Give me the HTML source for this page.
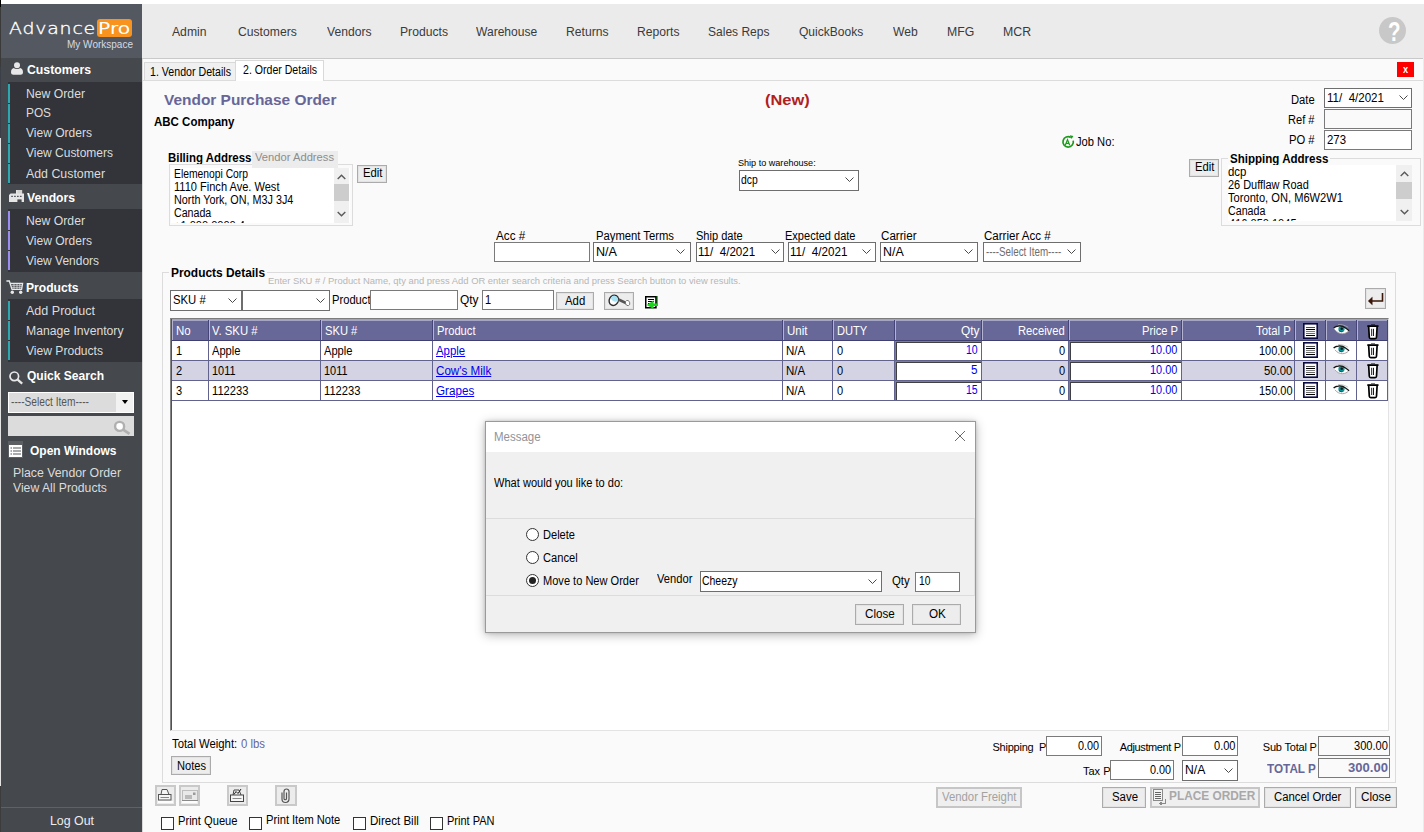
<!DOCTYPE html>
<html lang="en">
<head>
<meta charset="utf-8">
<title>AdvancePro - Vendor Purchase Order</title>
<style>
*{box-sizing:border-box;margin:0;padding:0}
html,body{width:1424px;height:832px;overflow:hidden;background:#fff}
body{position:relative;font-family:"Liberation Sans",sans-serif;font-size:11px;color:#000}
.a{position:absolute;white-space:pre}
svg{position:absolute;overflow:visible}
.tb{background:#fff;border:1px solid #7a7a7a}
.cb{background:#fff;border:1px solid #6e6e6e}
.btn{background:#ededed;border:1px solid #ababab;box-shadow:inset 0 0 0 1px #e3e3e3}
.dis{background:#efefef;border:2px solid #c6c6c6}
.gl{background:#62628f}
</style>
</head>
<body>
<div class="a" style="left:0px;top:0px;width:1px;height:7px;background:#000"></div>
<div class="a" style="left:0px;top:7px;width:1px;height:60px;background:#3a3a3a"></div>
<div class="a" style="left:0px;top:67px;width:1px;height:71px;background:#3b4048"></div>
<div class="a" style="left:0px;top:138px;width:1px;height:648px;background:#e4e4e4"></div>
<div class="a" style="left:0px;top:786px;width:1px;height:46px;background:#3c3c3c"></div>
<div class="a" style="left:1px;top:4px;width:141px;height:828px;background:#45484d"></div>
<div class="a" style="left:1px;top:4px;width:141px;height:54px;background:#545861"></div>
<span class="a" style="font-size:16px;font-weight:200;color:#fff;font-family:'DejaVu Sans Light','DejaVu Sans',sans-serif;left:8.5px;top:18.7px;line-height:20px;letter-spacing:0.7px;transform:scaleX(1.18);transform-origin:0 0;-webkit-text-stroke:0.35px #fff;">Advance</span>
<div class="a" style="left:97px;top:19px;width:35px;height:18px;background:#f7931e;border-radius:3px"></div>
<span class="a" style="font-size:16px;color:#fff;font-family:'DejaVu Sans',sans-serif;left:97.5px;top:18.7px;line-height:20px;transform:scaleX(1.27);transform-origin:0 0;">Pro</span>
<span class="a" style="font-size:10px;color:#d5dbe3;transform:scaleX(1.001);transform-origin:0 0;left:66.5px;top:37.7px;line-height:14px;">My Workspace</span>
<div class="a" style="left:1px;top:58px;width:141px;height:24px;background:#45484d"></div>
<svg style="left:11px;top:62px" width="12" height="13" viewBox="0 0 12 13"><circle cx="6" cy="3.2" r="3" fill="#e8e8e8"/><path d="M0 10.2c0-2.4 1.3-3.9 2.8-4.2 0.9 0.8 2 1.1 3.2 1.1s2.300-0.300 3.200-1.100c1.500 0.300 2.800 1.800 2.800 4.200 0 1.700-1 2.500-2.400 2.500h-7.200c-1.400 0-2.400-0.800-2.400-2.500z" fill="#e8e8e8"/></svg>
<span class="a" style="font-size:12px;font-weight:bold;color:#fff;transform:scaleX(1.021);transform-origin:0 0;left:26.5px;top:62.0px;line-height:16px;">Customers</span>
<div class="a" style="left:8px;top:82px;width:134px;height:102px;background:#323439"></div>
<div class="a" style="left:8px;top:84px;width:2px;height:19px;background:#2ba8b0"></div>
<div class="a" style="left:8px;top:104px;width:2px;height:19px;background:#2ba8b0"></div>
<div class="a" style="left:8px;top:124px;width:2px;height:19px;background:#2ba8b0"></div>
<div class="a" style="left:8px;top:144px;width:2px;height:19px;background:#2ba8b0"></div>
<div class="a" style="left:8px;top:164px;width:2px;height:19px;background:#2ba8b0"></div>
<span class="a" style="font-size:12px;color:#dcdcdc;transform:scaleX(1.017);transform-origin:0 0;left:25.5px;top:86.0px;line-height:16px;">New Order</span>
<span class="a" style="font-size:12px;color:#dcdcdc;transform:scaleX(0.986);transform-origin:0 0;left:25.5px;top:105.0px;line-height:16px;">POS</span>
<span class="a" style="font-size:12px;color:#dcdcdc;transform:scaleX(1.003);transform-origin:0 0;left:25.5px;top:125.0px;line-height:16px;">View Orders</span>
<span class="a" style="font-size:12px;color:#dcdcdc;transform:scaleX(0.998);transform-origin:0 0;left:25.5px;top:145.0px;line-height:16px;">View Customers</span>
<span class="a" style="font-size:12px;color:#dcdcdc;transform:scaleX(1.030);transform-origin:0 0;left:25.5px;top:165.5px;line-height:16px;">Add Customer</span>
<div class="a" style="left:1px;top:184px;width:141px;height:25px;background:#45484d"></div>
<svg style="left:9px;top:190px" width="15" height="12" viewBox="0 0 15 12" fill="#e6e6e6"><rect x="7" y="0" width="6.200" height="4" fill="#d4d4d4"/><rect x="7" y="0" width="1.400" height="4"/><path d="M0 5L1.600 3.500H15V12H0Z"/><g fill="#45484d"><rect x="2.200" y="5.800" width="1.700" height="1.100"/><rect x="5.100" y="5.800" width="1.700" height="1.100"/><rect x="8" y="5.800" width="1.700" height="1.100"/><rect x="10.900" y="5.800" width="1.700" height="1.100"/><rect x="8.400" y="9.400" width="4.200" height="2.600"/></g></svg>
<span class="a" style="font-size:12px;font-weight:bold;color:#fff;transform:scaleX(1.014);transform-origin:0 0;left:26.5px;top:189.5px;line-height:16px;">Vendors</span>
<div class="a" style="left:8px;top:209px;width:134px;height:63px;background:#323439"></div>
<div class="a" style="left:8px;top:211px;width:2px;height:19px;background:#9a8cf0"></div>
<div class="a" style="left:8px;top:231px;width:2px;height:19px;background:#9a8cf0"></div>
<div class="a" style="left:8px;top:251px;width:2px;height:19px;background:#9a8cf0"></div>
<span class="a" style="font-size:12px;color:#dcdcdc;transform:scaleX(1.017);transform-origin:0 0;left:25.5px;top:213.0px;line-height:16px;">New Order</span>
<span class="a" style="font-size:12px;color:#dcdcdc;transform:scaleX(1.003);transform-origin:0 0;left:25.5px;top:233.0px;line-height:16px;">View Orders</span>
<span class="a" style="font-size:12px;color:#dcdcdc;transform:scaleX(0.998);transform-origin:0 0;left:25.5px;top:252.5px;line-height:16px;">View Vendors</span>
<div class="a" style="left:1px;top:272px;width:141px;height:27px;background:#45484d"></div>
<svg style="left:6px;top:280px" width="17" height="14" viewBox="0 0 17 14" fill="none" stroke="#e8e8e8" stroke-width="1.300"><path d="M0.400 1H3.300L6 9.300H15.600L16.600 3.300H4.600"/><path d="M5.500 5.300H16M5.800 7.300H15.800M8 3.500V9M11 3.500V9M13.800 3.500V9" stroke-width="0.700"/><circle cx="6.300" cy="12.200" r="1.700" fill="#e8e8e8" stroke="none"/><circle cx="14.700" cy="12.200" r="1.700" fill="#e8e8e8" stroke="none"/></svg>
<span class="a" style="font-size:12px;font-weight:bold;color:#fff;transform:scaleX(1.009);transform-origin:0 0;left:26.0px;top:279.5px;line-height:16px;">Products</span>
<div class="a" style="left:8px;top:299px;width:134px;height:63px;background:#323439"></div>
<div class="a" style="left:8px;top:301px;width:2px;height:19px;background:#2ba8b0"></div>
<div class="a" style="left:8px;top:321px;width:2px;height:19px;background:#2ba8b0"></div>
<div class="a" style="left:8px;top:341px;width:2px;height:19px;background:#2ba8b0"></div>
<span class="a" style="font-size:12px;color:#dcdcdc;transform:scaleX(1.045);transform-origin:0 0;left:25.5px;top:302.5px;line-height:16px;">Add Product</span>
<span class="a" style="font-size:12px;color:#dcdcdc;transform:scaleX(1.015);transform-origin:0 0;left:25.5px;top:322.5px;line-height:16px;">Manage Inventory</span>
<span class="a" style="font-size:12px;color:#dcdcdc;transform:scaleX(1.007);transform-origin:0 0;left:25.5px;top:342.5px;line-height:16px;">View Products</span>
<svg style="left:9px;top:371px" width="14" height="13" viewBox="0 0 14 13" fill="none" stroke="#e8e8e8"><circle cx="5.300" cy="5.300" r="4.300" stroke-width="1.700"/><path d="M8.600 8.600l4.600 4" stroke-width="2.300"/></svg>
<span class="a" style="font-size:12px;font-weight:bold;color:#fff;transform:scaleX(1.004);transform-origin:0 0;left:26.5px;top:368.0px;line-height:16px;">Quick Search</span>
<div class="a" style="left:8px;top:392px;width:126px;height:21px;background:#fff"></div>
<div class="a" style="left:9px;top:393px;width:107px;height:19px;background:#dcdcdc"></div>
<div class="a" style="left:116px;top:393px;width:17px;height:19px;background:#f2f2f2"></div>
<span class="a" style="font-size:12px;color:#555;transform:scaleX(0.848);transform-origin:0 0;left:10.5px;top:393.5px;line-height:16px;">----Select Item----</span>
<div class="a" style="left:122px;top:400px;width:7px;height:4px;border:3.5px solid transparent;border-top:4px solid #000;border-bottom:0;width:0;height:0"></div>
<div class="a" style="left:8px;top:416px;width:126px;height:20px;background:#dcdcdc"></div>
<svg style="left:113px;top:420px" width="18" height="15" viewBox="0 0 18 15" fill="none" stroke="#b0b0b0"><circle cx="6.600" cy="6.400" r="4.500" stroke-width="2.400" fill="#fff"/><path d="M10.500 9.800l6 4" stroke-width="2.800"/></svg>
<svg style="left:8px;top:441px" width="15" height="17" viewBox="0 0 15 17"><rect width="15" height="17" fill="#5c5f64"/><rect x="1" y="4" width="13" height="12" fill="#fff"/><path d="M2.500 7h1.500M2.500 10h1.500M2.500 13h1.500M5 7h8M5 10h8M5 13h8" stroke="#55585d" stroke-width="1.200"/></svg>
<span class="a" style="font-size:12px;font-weight:bold;color:#fff;transform:scaleX(0.999);transform-origin:0 0;left:30.0px;top:442.5px;line-height:16px;">Open Windows</span>
<span class="a" style="font-size:12px;color:#dcdcdc;transform:scaleX(1.025);transform-origin:0 0;left:12.5px;top:464.5px;line-height:16px;">Place Vendor Order</span>
<span class="a" style="font-size:12px;color:#dcdcdc;transform:scaleX(1.016);transform-origin:0 0;left:12.5px;top:479.5px;line-height:16px;">View All Products</span>
<div class="a" style="left:1px;top:807px;width:141px;height:1px;background:#5e6166"></div>
<span class="a" style="font-size:12px;color:#ececec;transform:scaleX(1.030);transform-origin:0 0;left:50.0px;top:813.0px;line-height:16px;">Log Out</span>
<div class="a" style="left:142px;top:4px;width:1282px;height:55px;background:#ebebeb"></div>
<div class="a" style="left:142px;top:58px;width:1281px;height:1px;background:#c9c9c9"></div>
<span class="a" style="font-size:12px;color:#3a3a3a;transform:scaleX(1.014);transform-origin:0 0;left:171.5px;top:24.0px;line-height:16px;">Admin</span>
<span class="a" style="font-size:12px;color:#3a3a3a;transform:scaleX(1.013);transform-origin:0 0;left:238.2px;top:24.0px;line-height:16px;">Customers</span>
<span class="a" style="font-size:12px;color:#3a3a3a;transform:scaleX(1.010);transform-origin:0 0;left:326.5px;top:24.0px;line-height:16px;">Vendors</span>
<span class="a" style="font-size:12px;color:#3a3a3a;transform:scaleX(1.014);transform-origin:0 0;left:399.5px;top:24.0px;line-height:16px;">Products</span>
<span class="a" style="font-size:12px;color:#3a3a3a;transform:scaleX(1.005);transform-origin:0 0;left:476.2px;top:24.0px;line-height:16px;">Warehouse</span>
<span class="a" style="font-size:12px;color:#3a3a3a;transform:scaleX(1.011);transform-origin:0 0;left:566.2px;top:24.0px;line-height:16px;">Returns</span>
<span class="a" style="font-size:12px;color:#3a3a3a;transform:scaleX(1.011);transform-origin:0 0;left:637.0px;top:24.0px;line-height:16px;">Reports</span>
<span class="a" style="font-size:12px;color:#3a3a3a;transform:scaleX(1.002);transform-origin:0 0;left:708.2px;top:24.0px;line-height:16px;">Sales Reps</span>
<span class="a" style="font-size:12px;color:#3a3a3a;transform:scaleX(1.003);transform-origin:0 0;left:799.0px;top:24.0px;line-height:16px;">QuickBooks</span>
<span class="a" style="font-size:12px;color:#3a3a3a;transform:scaleX(1.011);transform-origin:0 0;left:893.2px;top:24.0px;line-height:16px;">Web</span>
<span class="a" style="font-size:12px;color:#3a3a3a;transform:scaleX(1.022);transform-origin:0 0;left:946.5px;top:24.0px;line-height:16px;">MFG</span>
<span class="a" style="font-size:12px;color:#3a3a3a;transform:scaleX(1.025);transform-origin:0 0;left:1002.5px;top:24.0px;line-height:16px;">MCR</span>
<div class="a" style="left:1379px;top:17px;width:27px;height:27px;background:#c8c8c8;border-radius:14px"></div>
<span class="a" style="font-size:27px;font-weight:bold;color:#fff;left:1387.8px;top:16.6px;line-height:31px;transform:scaleX(0.76);transform-origin:0 0;">?</span>
<div class="a" style="left:142px;top:59px;width:1281px;height:773px;background:#fafafa"></div>
<div class="a" style="left:1423px;top:59px;width:1px;height:773px;background:#ebebeb"></div>
<div class="a" style="left:142px;top:59px;width:1px;height:773px;background:#d8d8d8"></div>
<div class="a" style="left:143px;top:80px;width:1280px;height:1px;background:#dcdcdc"></div>
<div class="a" style="left:144px;top:62px;width:92px;height:19px;background:#f0f0f0;border:1px solid #d9d9d9;border-bottom:1px solid #dcdcdc"></div>
<div class="a" style="left:235px;top:60px;width:89px;height:21px;background:#fff;border:1px solid #d9d9d9;border-bottom:0"></div>
<span class="a" style="font-size:12px;transform:scaleX(0.886);transform-origin:0 0;left:150.0px;top:64.0px;line-height:16px;">1. Vendor Details</span>
<span class="a" style="font-size:12px;transform:scaleX(0.881);transform-origin:0 0;left:242.5px;top:62.0px;line-height:16px;">2. Order Details</span>
<div class="a" style="left:1397px;top:62px;width:17px;height:15px;background:#ff0000"></div>
<span class="a" style="font-size:10px;font-weight:bold;color:#fff;transform:scaleX(0.92);transform-origin:0 0;left:1402.5px;top:62.7px;line-height:14px;">x</span>
<span class="a" style="font-size:15px;font-weight:bold;color:#666699;transform:scaleX(1.029);transform-origin:0 0;left:164.0px;top:90.0px;line-height:19px;">Vendor Purchase Order</span>
<span class="a" style="font-size:12.3px;font-weight:bold;transform:scaleX(0.935);transform-origin:0 0;left:153.5px;top:113.8px;line-height:16.3px;">ABC Company</span>
<span class="a" style="font-size:15.5px;font-weight:bold;color:#b0201e;transform:scaleX(1.060);transform-origin:0 0;left:765.2px;top:90.1px;line-height:19.5px;">(New)</span>
<span class="a" style="font-size:12px;transform:scaleX(0.935);transform-origin:0 0;left:1290.8px;top:91.5px;line-height:16px;">Date</span>
<div class="a cb" style="left:1324px;top:88px;width:88px;height:20px;"></div>
<svg style="left:1398.5px;top:95.4px" width="9" height="5" viewBox="0 0 9 5" fill="none" stroke="#4a4a4a" stroke-width="1"><path d="M0.500 0.500l4 4 4-4"/></svg>
<span class="a" style="font-size:12px;transform:scaleX(0.963);transform-origin:0 0;left:1326.5px;top:90.0px;line-height:16px;">11/  4/2021</span>
<span class="a" style="font-size:12px;transform:scaleX(0.924);transform-origin:0 0;left:1288.0px;top:111.5px;line-height:16px;">Ref #</span>
<div class="a tb" style="left:1324px;top:109px;width:88px;height:20px;background:#fafafa"></div>
<span class="a" style="font-size:12px;transform:scaleX(0.936);transform-origin:0 0;left:1288.9px;top:131.7px;line-height:16px;">PO #</span>
<div class="a tb" style="left:1324px;top:130px;width:88px;height:20px;background:#fff"></div>
<span class="a" style="font-size:12px;transform:scaleX(0.949);transform-origin:0 0;left:1326.5px;top:131.7px;line-height:16px;">273</span>
<svg style="left:1061px;top:135px" width="14" height="14" viewBox="0 0 14 14" fill="none" stroke="#1c9a1c"><path d="M9.800 2.400a5.200 5.200 0 1 0 2.400 3.200" stroke-width="1.700"/><path d="M8.800 0.300l3.600 0.600-1.800 3.200z" fill="#1c9a1c" stroke="none"/><path d="M4.300 10.200l2.200-5.600 2.200 5.600M5.100 8.400h2.800" stroke-width="1.200"/></svg>
<span class="a" style="font-size:12px;transform:scaleX(0.931);transform-origin:0 0;left:1075.8px;top:134.0px;line-height:16px;">Job No:</span>
<div class="a" style="left:1221px;top:158px;width:200px;height:68px;border:1px solid #dcdcdc"></div>
<div class="a" style="left:1228px;top:152px;width:102px;height:14px;background:#fafafa"></div>
<span class="a" style="font-size:12px;font-weight:bold;transform:scaleX(0.962);transform-origin:0 0;left:1229.9px;top:150.8px;line-height:16px;">Shipping Address</span>
<div class="a" style="left:1228px;top:165px;width:184px;height:56px;background:#fff;overflow:hidden"><span class="a" style="left:1px;top:53px;font-size:12px;line-height:13px;transform:scaleX(0.92);transform-origin:0 0">416 858 1845</span></div>
<span class="a" style="font-size:12px;transform:scaleX(0.950);transform-origin:0 0;left:1228.1px;top:163.8px;line-height:16px;">dcp</span>
<span class="a" style="font-size:12px;transform:scaleX(0.912);transform-origin:0 0;left:1228.1px;top:176.7px;line-height:16px;">26 Dufflaw Road</span>
<span class="a" style="font-size:12px;transform:scaleX(0.927);transform-origin:0 0;left:1228.1px;top:189.7px;line-height:16px;">Toronto, ON, M6W2W1</span>
<span class="a" style="font-size:12px;transform:scaleX(0.889);transform-origin:0 0;left:1228.1px;top:202.5px;line-height:16px;">Canada</span>
<div class="a" style="left:1396px;top:165px;width:16px;height:56px;background:#f0f0f0"></div>
<div class="a" style="left:1396px;top:182px;width:16px;height:17px;background:#cdcdcd"></div>
<svg style="left:1399.5px;top:171px" width="9" height="6" viewBox="0 0 9 6" fill="none" stroke="#5a5a5a" stroke-width="1.400"><path d="M0.700 5l3.800-3.800 3.800 3.800"/></svg>
<svg style="left:1399.5px;top:209px" width="9" height="6" viewBox="0 0 9 6" fill="none" stroke="#5a5a5a" stroke-width="1.400"><path d="M0.700 1l3.800 3.800 3.800-3.800"/></svg>
<div class="a btn" style="left:1189px;top:159px;width:30px;height:18px;"></div>
<span class="a" style="font-size:12px;transform:scaleX(0.938);transform-origin:0 0;left:1195.1px;top:159.0px;line-height:16px;">Edit</span>
<span class="a" style="font-size:12px;font-weight:bold;transform:scaleX(0.953);transform-origin:0 0;left:168.0px;top:150.0px;line-height:16px;">Billing Address</span>
<div class="a" style="left:169px;top:164px;width:184px;height:62px;border:1px solid #dcdcdc"></div>
<div class="a" style="left:252px;top:151px;width:86px;height:17px;background:#ececec"></div>
<span class="a" style="font-size:11.5px;color:#8c8c8c;transform:scaleX(0.973);transform-origin:0 0;left:254.8px;top:150.4px;line-height:15.5px;">Vendor Address</span>
<div class="a" style="left:171px;top:168px;width:179px;height:55px;background:#fff;overflow:hidden"><span class="a" style="left:3px;top:52px;font-size:12px;line-height:13px;transform:scaleX(0.92);transform-origin:0 0">+1 888 8888 4</span></div>
<span class="a" style="font-size:12px;transform:scaleX(0.860);transform-origin:0 0;left:173.5px;top:166.0px;line-height:16px;">Elemenopi Corp</span>
<span class="a" style="font-size:12px;transform:scaleX(0.921);transform-origin:0 0;left:174.0px;top:179.0px;line-height:16px;">1110 Finch Ave. West</span>
<span class="a" style="font-size:12px;transform:scaleX(0.899);transform-origin:0 0;left:174.0px;top:192.0px;line-height:16px;">North York, ON, M3J 3J4</span>
<span class="a" style="font-size:12px;transform:scaleX(0.887);transform-origin:0 0;left:173.5px;top:205.0px;line-height:16px;">Canada</span>
<div class="a" style="left:334px;top:168px;width:15px;height:55px;background:#f0f0f0"></div>
<div class="a" style="left:334px;top:184px;width:15px;height:17px;background:#cdcdcd"></div>
<svg style="left:337.0px;top:174px" width="9" height="6" viewBox="0 0 9 6" fill="none" stroke="#5a5a5a" stroke-width="1.400"><path d="M0.700 5l3.800-3.800 3.800 3.800"/></svg>
<svg style="left:337.0px;top:211px" width="9" height="6" viewBox="0 0 9 6" fill="none" stroke="#5a5a5a" stroke-width="1.400"><path d="M0.700 1l3.800 3.800 3.800-3.800"/></svg>
<div class="a btn" style="left:357px;top:165px;width:30px;height:18px;"></div>
<span class="a" style="font-size:12px;transform:scaleX(0.943);transform-origin:0 0;left:363.0px;top:165.0px;line-height:16px;">Edit</span>
<span class="a" style="font-size:9.5px;transform:scaleX(0.955);transform-origin:0 0;left:737.8px;top:156.1px;line-height:13.5px;">Ship to warehouse:</span>
<div class="a cb" style="left:739px;top:170px;width:120px;height:21px;"></div>
<svg style="left:845.3px;top:177.4px" width="9" height="5" viewBox="0 0 9 5" fill="none" stroke="#4a4a4a" stroke-width="1"><path d="M0.500 0.500l4 4 4-4"/></svg>
<span class="a" style="font-size:12px;transform:scaleX(0.863);transform-origin:0 0;left:741.3px;top:171.5px;line-height:16px;">dcp</span>
<span class="a" style="font-size:12px;transform:scaleX(0.973);transform-origin:0 0;left:495.8px;top:227.5px;line-height:16px;">Acc #</span>
<div class="a tb" style="left:494px;top:242px;width:96px;height:20px;background:#fff"></div>
<span class="a" style="font-size:12px;transform:scaleX(0.938);transform-origin:0 0;left:595.8px;top:227.5px;line-height:16px;">Payment Terms</span>
<div class="a cb" style="left:593px;top:242px;width:98px;height:20px;"></div>
<svg style="left:676.0px;top:249.4px" width="9" height="5" viewBox="0 0 9 5" fill="none" stroke="#4a4a4a" stroke-width="1"><path d="M0.500 0.500l4 4 4-4"/></svg>
<span class="a" style="font-size:12px;transform:scaleX(1.049);transform-origin:0 0;left:595.8px;top:244.0px;line-height:16px;">N/A</span>
<span class="a" style="font-size:12px;transform:scaleX(0.921);transform-origin:0 0;left:695.8px;top:227.5px;line-height:16px;">Ship date</span>
<div class="a cb" style="left:696px;top:242px;width:88px;height:20px;"></div>
<svg style="left:770.5px;top:249.4px" width="9" height="5" viewBox="0 0 9 5" fill="none" stroke="#4a4a4a" stroke-width="1"><path d="M0.500 0.500l4 4 4-4"/></svg>
<span class="a" style="font-size:12px;transform:scaleX(0.967);transform-origin:0 0;left:698.3px;top:244.0px;line-height:16px;">11/  4/2021</span>
<span class="a" style="font-size:12px;transform:scaleX(0.919);transform-origin:0 0;left:785.0px;top:227.5px;line-height:16px;">Expected date</span>
<div class="a cb" style="left:788px;top:242px;width:88px;height:20px;"></div>
<svg style="left:862.0px;top:249.4px" width="9" height="5" viewBox="0 0 9 5" fill="none" stroke="#4a4a4a" stroke-width="1"><path d="M0.500 0.500l4 4 4-4"/></svg>
<span class="a" style="font-size:12px;transform:scaleX(0.972);transform-origin:0 0;left:790.0px;top:244.0px;line-height:16px;">11/  4/2021</span>
<span class="a" style="font-size:12px;transform:scaleX(0.968);transform-origin:0 0;left:880.8px;top:227.5px;line-height:16px;">Carrier</span>
<div class="a cb" style="left:880px;top:242px;width:98px;height:20px;"></div>
<svg style="left:964.3px;top:249.4px" width="9" height="5" viewBox="0 0 9 5" fill="none" stroke="#4a4a4a" stroke-width="1"><path d="M0.500 0.500l4 4 4-4"/></svg>
<span class="a" style="font-size:12px;transform:scaleX(1.034);transform-origin:0 0;left:882.8px;top:244.0px;line-height:16px;">N/A</span>
<span class="a" style="font-size:12px;transform:scaleX(0.962);transform-origin:0 0;left:983.8px;top:227.5px;line-height:16px;">Carrier Acc #</span>
<div class="a cb" style="left:983px;top:242px;width:98px;height:20px;"></div>
<svg style="left:1067.3px;top:249.4px" width="9" height="5" viewBox="0 0 9 5" fill="none" stroke="#4a4a4a" stroke-width="1"><path d="M0.500 0.500l4 4 4-4"/></svg>
<span class="a" style="font-size:12px;color:#6d6d6d;transform:scaleX(0.817);transform-origin:0 0;left:985.8px;top:244.0px;line-height:16px;">----Select Item----</span>
<div class="a" style="left:162px;top:272px;width:1234px;height:511px;border:1px solid #dcdcdc"></div>
<div class="a" style="left:169px;top:264px;width:98px;height:16px;background:#fafafa"></div>
<span class="a" style="font-size:12px;font-weight:bold;transform:scaleX(0.993);transform-origin:0 0;left:170.5px;top:265.3px;line-height:16px;">Products Details</span>
<span class="a" style="font-size:9.5px;color:#b6b6b6;transform:scaleX(0.989);transform-origin:0 0;left:267.8px;top:274.1px;line-height:13.5px;">Enter SKU # / Product Name, qty and press Add OR enter search criteria and press Search button to view results.</span>
<div class="a cb" style="left:170px;top:290px;width:72px;height:21px;"></div>
<svg style="left:228.3px;top:297.9px" width="9" height="5" viewBox="0 0 9 5" fill="none" stroke="#4a4a4a" stroke-width="1"><path d="M0.500 0.500l4 4 4-4"/></svg>
<span class="a" style="font-size:12px;transform:scaleX(0.943);transform-origin:0 0;left:172.8px;top:292.0px;line-height:16px;">SKU #</span>
<div class="a cb" style="left:242px;top:290px;width:88px;height:21px;"></div>
<svg style="left:316.3px;top:297.9px" width="9" height="5" viewBox="0 0 9 5" fill="none" stroke="#4a4a4a" stroke-width="1"><path d="M0.500 0.500l4 4 4-4"/></svg>
<span class="a" style="font-size:12px;transform:scaleX(0.931);transform-origin:0 0;left:332.0px;top:292.0px;line-height:16px;">Product</span>
<div class="a tb" style="left:370px;top:290px;width:88px;height:20px;background:#fff"></div>
<span class="a" style="font-size:12px;transform:scaleX(0.991);transform-origin:0 0;left:459.5px;top:292.0px;line-height:16px;">Qty</span>
<div class="a tb" style="left:482px;top:290px;width:72px;height:20px;background:#fff"></div>
<span class="a" style="font-size:12px;transform:scaleX(0.92);transform-origin:0 0;left:485.0px;top:292.0px;line-height:16px;">1</span>
<div class="a btn" style="left:556px;top:292px;width:38px;height:18px;"></div>
<span class="a" style="font-size:12px;transform:scaleX(0.946);transform-origin:0 0;left:565.3px;top:292.5px;line-height:16px;">Add</span>
<div class="a btn" style="left:604px;top:292px;width:30px;height:18px;"></div>
<svg style="left:608px;top:294px" width="24" height="14" viewBox="0 0 24 14" fill="none"><g transform="rotate(28 5.800 6.300)"><ellipse cx="5.800" cy="6.300" rx="4.500" ry="5.300" fill="#fff" stroke="#2e2e2e" stroke-width="1.400"/><path d="M1.900 6.300a3.900 4.700 0 0 1 7.800 0c-2 -1.500 -5.500 -1.500 -7.800 0z" fill="#a6e2f3"/><ellipse cx="5.600" cy="4.600" rx="3.300" ry="2.600" fill="#a6e2f3"/></g><path d="M10.500 5.500L19 9.500" stroke="#555" stroke-width="2.600"/><ellipse cx="19.600" cy="9" rx="2.100" ry="2.700" transform="rotate(-20 19.600 9)" fill="#fff" stroke="#666" stroke-width="0.800"/></svg>
<svg style="left:645px;top:296px" width="13" height="13" viewBox="0 0 13 13"><rect x="11" y="0" width="2" height="9.500" fill="#1fd01f"/><rect x="0.750" y="0.750" width="10.200" height="11" fill="#fff" stroke="#000" stroke-width="1.500"/><path d="M2.500 3.500h6.500M2.500 5.500h6.500M2.500 7.500h3" stroke="#000" stroke-width="1" shape-rendering="crispEdges"/><path d="M13 7.500L8.600 7.500L8.600 4.300L1.700 8.900L8.600 13L8.600 10L13 10Z" fill="#1fd01f"/></svg>
<div class="a btn" style="left:1365px;top:288px;width:21px;height:21px;"></div>
<svg style="left:1368px;top:293px" width="16" height="12" viewBox="0 0 16 12" fill="none" stroke="#3a1608" stroke-width="1.600"><path d="M14.500 0v8h-11"/><path d="M4.300 4l-4.200 4 4.200 4z" fill="#3a1608" stroke-width="0.300"/></svg>
<div class="a" style="left:170px;top:318px;width:1219px;height:413px;background:#fff;border-top:1px solid #7c7c7c;border-left:1px solid #858585;border-right:1px solid #e3e3e3;border-bottom:1px solid #e3e3e3"></div>
<div class="a" style="left:171px;top:319px;width:1217px;height:1px;background:#a6a6a6"></div>
<div class="a" style="left:171px;top:319px;width:1px;height:411px;background:#525252"></div>
<div class="a" style="left:172px;top:320px;width:1216px;height:21px;background:#676798"></div>
<div class="a" style="left:172px;top:320px;width:1216px;height:1px;background:#a4a4c6"></div>
<div class="a" style="left:172px;top:340px;width:1216px;height:1px;background:#3f3f72"></div>
<div class="a" style="left:172px;top:320px;width:1px;height:20px;background:#b4b4d2"></div>
<div class="a" style="left:209px;top:320px;width:1px;height:20px;background:#b4b4d2"></div>
<div class="a" style="left:321px;top:320px;width:1px;height:20px;background:#b4b4d2"></div>
<div class="a" style="left:433px;top:320px;width:1px;height:20px;background:#b4b4d2"></div>
<div class="a" style="left:783px;top:320px;width:1px;height:20px;background:#b4b4d2"></div>
<div class="a" style="left:833px;top:320px;width:1px;height:20px;background:#b4b4d2"></div>
<div class="a" style="left:895px;top:320px;width:1px;height:20px;background:#b4b4d2"></div>
<div class="a" style="left:982px;top:320px;width:1px;height:20px;background:#b4b4d2"></div>
<div class="a" style="left:1069px;top:320px;width:1px;height:20px;background:#b4b4d2"></div>
<div class="a" style="left:1182px;top:320px;width:1px;height:20px;background:#b4b4d2"></div>
<div class="a" style="left:1295px;top:320px;width:1px;height:20px;background:#b4b4d2"></div>
<div class="a" style="left:1326px;top:320px;width:1px;height:20px;background:#b4b4d2"></div>
<div class="a" style="left:1357px;top:320px;width:1px;height:20px;background:#b4b4d2"></div>
<div class="a" style="left:208px;top:320px;width:1px;height:21px;background:#45457a"></div>
<div class="a" style="left:320px;top:320px;width:1px;height:21px;background:#45457a"></div>
<div class="a" style="left:432px;top:320px;width:1px;height:21px;background:#45457a"></div>
<div class="a" style="left:782px;top:320px;width:1px;height:21px;background:#45457a"></div>
<div class="a" style="left:832px;top:320px;width:1px;height:21px;background:#45457a"></div>
<div class="a" style="left:894px;top:320px;width:1px;height:21px;background:#45457a"></div>
<div class="a" style="left:981px;top:320px;width:1px;height:21px;background:#45457a"></div>
<div class="a" style="left:1068px;top:320px;width:1px;height:21px;background:#45457a"></div>
<div class="a" style="left:1181px;top:320px;width:1px;height:21px;background:#45457a"></div>
<div class="a" style="left:1294px;top:320px;width:1px;height:21px;background:#45457a"></div>
<div class="a" style="left:1325px;top:320px;width:1px;height:21px;background:#45457a"></div>
<div class="a" style="left:1356px;top:320px;width:1px;height:21px;background:#45457a"></div>
<div class="a" style="left:1387px;top:320px;width:1px;height:21px;background:#45457a"></div>
<div class="a" style="left:172px;top:361px;width:1216px;height:19px;background:#d3d3e3"></div>
<div class="a" style="left:172px;top:360px;width:1216px;height:1px;background:#62628f"></div>
<div class="a" style="left:172px;top:380px;width:1216px;height:1px;background:#62628f"></div>
<div class="a" style="left:172px;top:400px;width:1216px;height:1px;background:#62628f"></div>
<div class="a" style="left:208px;top:341px;width:1px;height:60px;background:#62628f"></div>
<div class="a" style="left:320px;top:341px;width:1px;height:60px;background:#62628f"></div>
<div class="a" style="left:432px;top:341px;width:1px;height:60px;background:#62628f"></div>
<div class="a" style="left:782px;top:341px;width:1px;height:60px;background:#62628f"></div>
<div class="a" style="left:832px;top:341px;width:1px;height:60px;background:#62628f"></div>
<div class="a" style="left:894px;top:341px;width:1px;height:60px;background:#62628f"></div>
<div class="a" style="left:981px;top:341px;width:1px;height:60px;background:#62628f"></div>
<div class="a" style="left:1068px;top:341px;width:1px;height:60px;background:#62628f"></div>
<div class="a" style="left:1181px;top:341px;width:1px;height:60px;background:#62628f"></div>
<div class="a" style="left:1294px;top:341px;width:1px;height:60px;background:#62628f"></div>
<div class="a" style="left:1325px;top:341px;width:1px;height:60px;background:#62628f"></div>
<div class="a" style="left:1356px;top:341px;width:1px;height:60px;background:#62628f"></div>
<div class="a" style="left:1387px;top:341px;width:1px;height:60px;background:#62628f"></div>
<span class="a" style="font-size:12px;color:#fff;transform:scaleX(0.958);transform-origin:0 0;left:175.8px;top:322.8px;line-height:16px;">No</span>
<span class="a" style="font-size:12px;color:#fff;transform:scaleX(0.943);transform-origin:0 0;left:212.0px;top:322.8px;line-height:16px;">V. SKU #</span>
<span class="a" style="font-size:12px;color:#fff;transform:scaleX(0.931);transform-origin:0 0;left:324.5px;top:322.8px;line-height:16px;">SKU #</span>
<span class="a" style="font-size:12px;color:#fff;transform:scaleX(0.931);transform-origin:0 0;left:437.0px;top:322.8px;line-height:16px;">Product</span>
<span class="a" style="font-size:12px;color:#fff;transform:scaleX(0.960);transform-origin:0 0;left:787.0px;top:322.8px;line-height:16px;">Unit</span>
<span class="a" style="font-size:12px;color:#fff;transform:scaleX(0.927);transform-origin:0 0;left:837.0px;top:322.8px;line-height:16px;">DUTY</span>
<span class="a" style="font-size:12px;color:#fff;transform:scaleX(0.991);transform-origin:0 0;left:960.8px;top:322.8px;line-height:16px;">Qty</span>
<span class="a" style="font-size:12px;color:#fff;transform:scaleX(0.933);transform-origin:0 0;left:1018.3px;top:322.8px;line-height:16px;">Received</span>
<span class="a" style="font-size:12px;color:#fff;transform:scaleX(0.931);transform-origin:0 0;left:1142.0px;top:322.8px;line-height:16px;">Price P</span>
<span class="a" style="font-size:12px;color:#fff;transform:scaleX(0.946);transform-origin:0 0;left:1256.3px;top:322.8px;line-height:16px;">Total P</span>
<svg style="left:1303px;top:323px" width="15" height="16" viewBox="0 0 15 16" shape-rendering="crispEdges"><rect x="0" y="0" width="15" height="16" fill="#0a0a40"/><rect x="1.600" y="1.600" width="11.800" height="12.800" fill="#fbfbfb" shape-rendering="auto"/><rect x="3" y="4" width="9" height="1" fill="#4a4a4a"/><rect x="3" y="6" width="9" height="1" fill="#000"/><rect x="3" y="8" width="9" height="1" fill="#7a7a7a"/><rect x="3" y="10" width="9" height="1" fill="#6a6a6a"/><rect x="3" y="12" width="9" height="1" fill="#000"/></svg>
<svg style="left:1333px;top:324px" width="17" height="11" viewBox="0 0 17 11" fill="none"><path d="M0.500 3.800C2 2.600 4 2 5.500 2C8 1.600 11 2.800 12.500 4C14 5 15.500 6 16 6.800C15 8.400 12 9.600 9.500 9.700C7 9.800 4 8.500 2 5.900Z" fill="#fdfdfd"/><path d="M5 0.600C8 0.200 12 1.200 15.200 3.300" stroke="#b4b4b4" stroke-width="0.700"/><circle cx="8.500" cy="5" r="3.100" fill="#079292"/><path d="M5.600 5.800a3.100 3.100 0 0 0 5 1.800c-1.800 0.300-3.600-0.400-5-1.800z" fill="#1838a8"/><circle cx="8.700" cy="4.700" r="1.200" fill="#0c1418"/><path d="M2 5.900C4 8.500 7 9.800 9.500 9.700C12 9.600 14 8.600 15.200 7.300" stroke="#9c9c9c" stroke-width="0.900"/><path d="M0.600 4C2 2.700 4 2.100 5.500 2C8 1.600 11 2.800 12.500 4C14 5 15.300 5.900 16 6.700" stroke="#161616" stroke-width="1.400"/></svg>
<svg style="left:1366.500px;top:323.5px" width="12" height="16" viewBox="0 0 12 16" fill="none" stroke="#000"><path d="M4.500 0.500h1M6.500 0.500h1" stroke-width="1"/><rect x="0.300" y="1.200" width="11.200" height="1.800" fill="#000" stroke="none"/><path d="M1.700 3L2.300 13.300Q2.400 14.600 3.700 14.600L8.100 14.600Q9.400 14.600 9.500 13.300L10.100 3" stroke-width="1.700" fill="#fff"/><path d="M4.700 4.800V12M6.500 4.800V12" stroke-width="0.900"/></svg>
<span class="a" style="font-size:12px;transform:scaleX(0.92);transform-origin:0 0;left:175.8px;top:342.6px;line-height:16px;">1</span>
<span class="a" style="font-size:12px;transform:scaleX(0.928);transform-origin:0 0;left:212.0px;top:342.6px;line-height:16px;">Apple</span>
<span class="a" style="font-size:12px;transform:scaleX(0.928);transform-origin:0 0;left:324.0px;top:342.6px;line-height:16px;">Apple</span>
<span class="a" style="font-size:12px;color:#0000ee;transform:scaleX(0.951);transform-origin:0 0;left:435.8px;top:342.6px;line-height:16px;text-decoration:underline;">Apple</span>
<span class="a" style="font-size:12px;transform:scaleX(0.959);transform-origin:0 0;left:785.8px;top:342.6px;line-height:16px;">N/A</span>
<span class="a" style="font-size:12px;transform:scaleX(0.92);transform-origin:0 0;left:836.8px;top:342.6px;line-height:16px;">0</span>
<div class="a" style="left:895px;top:341px;width:86px;height:19px;background:#fff;box-shadow:inset 1px 1px 0 #808080,inset 2px 2px 0 #404040"></div>
<span class="a" style="font-size:12px;color:#0000f4;transform:scaleX(0.876);transform-origin:0 0;left:965.8px;top:341.8px;line-height:16px;">10</span>
<span class="a" style="font-size:12px;transform:scaleX(0.92);transform-origin:0 0;left:1058.8px;top:342.6px;line-height:16px;">0</span>
<div class="a" style="left:1069px;top:341px;width:112px;height:19px;background:#fff;box-shadow:inset 1px 1px 0 #808080,inset 2px 2px 0 #404040"></div>
<span class="a" style="font-size:12px;color:#0000f4;transform:scaleX(0.909);transform-origin:0 0;left:1149.5px;top:341.8px;line-height:16px;">10.00</span>
<span class="a" style="font-size:12px;transform:scaleX(0.913);transform-origin:0 0;left:1258.8px;top:342.6px;line-height:16px;">100.00</span>
<svg style="left:1303px;top:342px" width="15" height="16" viewBox="0 0 15 16" shape-rendering="crispEdges"><rect x="0" y="0" width="15" height="16" fill="#0a0a40"/><rect x="1.600" y="1.600" width="11.800" height="12.800" fill="#fbfbfb" shape-rendering="auto"/><rect x="3" y="4" width="9" height="1" fill="#4a4a4a"/><rect x="3" y="6" width="9" height="1" fill="#000"/><rect x="3" y="8" width="9" height="1" fill="#7a7a7a"/><rect x="3" y="10" width="9" height="1" fill="#6a6a6a"/><rect x="3" y="12" width="9" height="1" fill="#000"/></svg>
<svg style="left:1333px;top:344px" width="17" height="11" viewBox="0 0 17 11" fill="none"><path d="M0.500 3.800C2 2.600 4 2 5.500 2C8 1.600 11 2.800 12.500 4C14 5 15.500 6 16 6.800C15 8.400 12 9.600 9.500 9.700C7 9.800 4 8.500 2 5.900Z" fill="#fdfdfd"/><path d="M5 0.600C8 0.200 12 1.200 15.200 3.300" stroke="#b4b4b4" stroke-width="0.700"/><circle cx="8.500" cy="5" r="3.100" fill="#079292"/><path d="M5.600 5.800a3.100 3.100 0 0 0 5 1.800c-1.800 0.300-3.600-0.400-5-1.800z" fill="#1838a8"/><circle cx="8.700" cy="4.700" r="1.200" fill="#0c1418"/><path d="M2 5.900C4 8.500 7 9.800 9.500 9.700C12 9.600 14 8.600 15.200 7.300" stroke="#9c9c9c" stroke-width="0.900"/><path d="M0.600 4C2 2.700 4 2.100 5.500 2C8 1.600 11 2.800 12.500 4C14 5 15.300 5.900 16 6.700" stroke="#161616" stroke-width="1.400"/></svg>
<svg style="left:1366.500px;top:343px" width="12" height="16" viewBox="0 0 12 16" fill="none" stroke="#000"><path d="M4.500 0.500h1M6.500 0.500h1" stroke-width="1"/><rect x="0.300" y="1.200" width="11.200" height="1.800" fill="#000" stroke="none"/><path d="M1.700 3L2.300 13.300Q2.400 14.600 3.700 14.600L8.100 14.600Q9.400 14.600 9.500 13.300L10.100 3" stroke-width="1.700" fill="#fff"/><path d="M4.700 4.800V12M6.500 4.800V12" stroke-width="0.900"/></svg>
<span class="a" style="font-size:12px;transform:scaleX(0.92);transform-origin:0 0;left:175.8px;top:362.6px;line-height:16px;">2</span>
<span class="a" style="font-size:12px;transform:scaleX(0.910);transform-origin:0 0;left:212.0px;top:362.6px;line-height:16px;">1011</span>
<span class="a" style="font-size:12px;transform:scaleX(0.910);transform-origin:0 0;left:324.0px;top:362.6px;line-height:16px;">1011</span>
<span class="a" style="font-size:12px;color:#0000ee;transform:scaleX(0.969);transform-origin:0 0;left:435.8px;top:362.6px;line-height:16px;text-decoration:underline;">Cow&#x27;s Milk</span>
<span class="a" style="font-size:12px;transform:scaleX(0.959);transform-origin:0 0;left:785.8px;top:362.6px;line-height:16px;">N/A</span>
<span class="a" style="font-size:12px;transform:scaleX(0.92);transform-origin:0 0;left:836.8px;top:362.6px;line-height:16px;">0</span>
<div class="a" style="left:895px;top:361px;width:86px;height:19px;background:#fff;box-shadow:inset 1px 1px 0 #808080,inset 2px 2px 0 #404040"></div>
<span class="a" style="font-size:12px;color:#0000f4;transform:scaleX(0.972);transform-origin:0 0;left:971.0px;top:361.8px;line-height:16px;">5</span>
<span class="a" style="font-size:12px;transform:scaleX(0.92);transform-origin:0 0;left:1058.8px;top:362.6px;line-height:16px;">0</span>
<div class="a" style="left:1069px;top:361px;width:112px;height:19px;background:#fff;box-shadow:inset 1px 1px 0 #808080,inset 2px 2px 0 #404040"></div>
<span class="a" style="font-size:12px;color:#0000f4;transform:scaleX(0.909);transform-origin:0 0;left:1149.5px;top:361.8px;line-height:16px;">10.00</span>
<span class="a" style="font-size:12px;transform:scaleX(0.942);transform-origin:0 0;left:1264.0px;top:362.6px;line-height:16px;">50.00</span>
<svg style="left:1303px;top:362px" width="15" height="16" viewBox="0 0 15 16" shape-rendering="crispEdges"><rect x="0" y="0" width="15" height="16" fill="#0a0a40"/><rect x="1.600" y="1.600" width="11.800" height="12.800" fill="#fbfbfb" shape-rendering="auto"/><rect x="3" y="4" width="9" height="1" fill="#4a4a4a"/><rect x="3" y="6" width="9" height="1" fill="#000"/><rect x="3" y="8" width="9" height="1" fill="#7a7a7a"/><rect x="3" y="10" width="9" height="1" fill="#6a6a6a"/><rect x="3" y="12" width="9" height="1" fill="#000"/></svg>
<svg style="left:1333px;top:364px" width="17" height="11" viewBox="0 0 17 11" fill="none"><path d="M0.500 3.800C2 2.600 4 2 5.500 2C8 1.600 11 2.800 12.500 4C14 5 15.500 6 16 6.800C15 8.400 12 9.600 9.500 9.700C7 9.800 4 8.500 2 5.900Z" fill="#fdfdfd"/><path d="M5 0.600C8 0.200 12 1.200 15.200 3.300" stroke="#b4b4b4" stroke-width="0.700"/><circle cx="8.500" cy="5" r="3.100" fill="#079292"/><path d="M5.600 5.800a3.100 3.100 0 0 0 5 1.800c-1.800 0.300-3.600-0.400-5-1.800z" fill="#1838a8"/><circle cx="8.700" cy="4.700" r="1.200" fill="#0c1418"/><path d="M2 5.900C4 8.500 7 9.800 9.500 9.700C12 9.600 14 8.600 15.200 7.300" stroke="#9c9c9c" stroke-width="0.900"/><path d="M0.600 4C2 2.700 4 2.100 5.500 2C8 1.600 11 2.800 12.500 4C14 5 15.300 5.900 16 6.700" stroke="#161616" stroke-width="1.400"/></svg>
<svg style="left:1366.500px;top:363px" width="12" height="16" viewBox="0 0 12 16" fill="none" stroke="#000"><path d="M4.500 0.500h1M6.500 0.500h1" stroke-width="1"/><rect x="0.300" y="1.200" width="11.200" height="1.800" fill="#000" stroke="none"/><path d="M1.700 3L2.300 13.300Q2.400 14.600 3.700 14.600L8.100 14.600Q9.400 14.600 9.500 13.300L10.100 3" stroke-width="1.700" fill="#fff"/><path d="M4.700 4.800V12M6.500 4.800V12" stroke-width="0.900"/></svg>
<span class="a" style="font-size:12px;transform:scaleX(0.92);transform-origin:0 0;left:175.8px;top:382.6px;line-height:16px;">3</span>
<span class="a" style="font-size:12px;transform:scaleX(0.932);transform-origin:0 0;left:212.0px;top:382.6px;line-height:16px;">112233</span>
<span class="a" style="font-size:12px;transform:scaleX(0.932);transform-origin:0 0;left:324.0px;top:382.6px;line-height:16px;">112233</span>
<span class="a" style="font-size:12px;color:#0000ee;transform:scaleX(0.971);transform-origin:0 0;left:435.8px;top:382.6px;line-height:16px;text-decoration:underline;">Grapes</span>
<span class="a" style="font-size:12px;transform:scaleX(0.959);transform-origin:0 0;left:785.8px;top:382.6px;line-height:16px;">N/A</span>
<span class="a" style="font-size:12px;transform:scaleX(0.92);transform-origin:0 0;left:836.8px;top:382.6px;line-height:16px;">0</span>
<div class="a" style="left:895px;top:381px;width:86px;height:19px;background:#fff;box-shadow:inset 1px 1px 0 #808080,inset 2px 2px 0 #404040"></div>
<span class="a" style="font-size:12px;color:#0000f4;transform:scaleX(0.876);transform-origin:0 0;left:965.8px;top:381.8px;line-height:16px;">15</span>
<span class="a" style="font-size:12px;transform:scaleX(0.92);transform-origin:0 0;left:1058.8px;top:382.6px;line-height:16px;">0</span>
<div class="a" style="left:1069px;top:381px;width:112px;height:19px;background:#fff;box-shadow:inset 1px 1px 0 #808080,inset 2px 2px 0 #404040"></div>
<span class="a" style="font-size:12px;color:#0000f4;transform:scaleX(0.909);transform-origin:0 0;left:1149.5px;top:381.8px;line-height:16px;">10.00</span>
<span class="a" style="font-size:12px;transform:scaleX(0.913);transform-origin:0 0;left:1258.8px;top:382.6px;line-height:16px;">150.00</span>
<svg style="left:1303px;top:382px" width="15" height="16" viewBox="0 0 15 16" shape-rendering="crispEdges"><rect x="0" y="0" width="15" height="16" fill="#0a0a40"/><rect x="1.600" y="1.600" width="11.800" height="12.800" fill="#fbfbfb" shape-rendering="auto"/><rect x="3" y="4" width="9" height="1" fill="#4a4a4a"/><rect x="3" y="6" width="9" height="1" fill="#000"/><rect x="3" y="8" width="9" height="1" fill="#7a7a7a"/><rect x="3" y="10" width="9" height="1" fill="#6a6a6a"/><rect x="3" y="12" width="9" height="1" fill="#000"/></svg>
<svg style="left:1333px;top:384px" width="17" height="11" viewBox="0 0 17 11" fill="none"><path d="M0.500 3.800C2 2.600 4 2 5.500 2C8 1.600 11 2.800 12.500 4C14 5 15.500 6 16 6.800C15 8.400 12 9.600 9.500 9.700C7 9.800 4 8.500 2 5.900Z" fill="#fdfdfd"/><path d="M5 0.600C8 0.200 12 1.200 15.200 3.300" stroke="#b4b4b4" stroke-width="0.700"/><circle cx="8.500" cy="5" r="3.100" fill="#079292"/><path d="M5.600 5.800a3.100 3.100 0 0 0 5 1.800c-1.800 0.300-3.600-0.400-5-1.800z" fill="#1838a8"/><circle cx="8.700" cy="4.700" r="1.200" fill="#0c1418"/><path d="M2 5.900C4 8.500 7 9.800 9.500 9.700C12 9.600 14 8.600 15.200 7.300" stroke="#9c9c9c" stroke-width="0.900"/><path d="M0.600 4C2 2.700 4 2.100 5.500 2C8 1.600 11 2.800 12.500 4C14 5 15.300 5.900 16 6.700" stroke="#161616" stroke-width="1.400"/></svg>
<svg style="left:1366.500px;top:383px" width="12" height="16" viewBox="0 0 12 16" fill="none" stroke="#000"><path d="M4.500 0.500h1M6.500 0.500h1" stroke-width="1"/><rect x="0.300" y="1.200" width="11.200" height="1.800" fill="#000" stroke="none"/><path d="M1.700 3L2.300 13.300Q2.400 14.600 3.700 14.600L8.100 14.600Q9.400 14.600 9.500 13.300L10.100 3" stroke-width="1.700" fill="#fff"/><path d="M4.700 4.800V12M6.500 4.800V12" stroke-width="0.900"/></svg>
<span class="a" style="font-size:12px;transform:scaleX(0.943);transform-origin:0 0;left:171.8px;top:735.8px;line-height:16px;">Total Weight:</span>
<span class="a" style="font-size:12px;color:#666699;transform:scaleX(0.946);transform-origin:0 0;left:240.5px;top:735.8px;line-height:16px;">0 lbs</span>
<div class="a btn" style="left:171px;top:756px;width:40px;height:19px;"></div>
<span class="a" style="font-size:12px;transform:scaleX(0.925);transform-origin:0 0;left:176.8px;top:757.8px;line-height:16px;">Notes</span>
<span class="a" style="font-size:11px;letter-spacing:-0.23px;left:992.5px;top:739.9px;line-height:15px;">Shipping</span>
<span class="a" style="font-size:11px;left:1039.1px;top:739.9px;line-height:15px;">P</span>
<div class="a tb" style="left:1046px;top:736px;width:56px;height:20px;background:#fff"></div>
<span class="a" style="font-size:12px;transform:scaleX(0.903);transform-origin:0 0;left:1078.0px;top:738.0px;line-height:16px;">0.00</span>
<span class="a" style="font-size:11px;letter-spacing:-0.38px;left:1119.8px;top:739.9px;line-height:15px;">Adjustment P</span>
<div class="a tb" style="left:1182px;top:736px;width:56px;height:20px;background:#fff"></div>
<span class="a" style="font-size:12px;transform:scaleX(0.920);transform-origin:0 0;left:1213.7px;top:738.0px;line-height:16px;">0.00</span>
<span class="a" style="font-size:11px;letter-spacing:-0.19px;left:1262.8px;top:739.9px;line-height:15px;">Sub Total P</span>
<div class="a tb" style="left:1318px;top:736px;width:72px;height:20px;background:#fafafa"></div>
<span class="a" style="font-size:12px;transform:scaleX(0.924);transform-origin:0 0;left:1353.9px;top:738.0px;line-height:16px;">300.00</span>
<span class="a" style="font-size:11px;letter-spacing:0.02px;left:1082.9px;top:763.5px;line-height:15px;">Tax P</span>
<div class="a tb" style="left:1110px;top:760px;width:64px;height:20px;background:#fff"></div>
<span class="a" style="font-size:12px;transform:scaleX(0.903);transform-origin:0 0;left:1149.9px;top:761.7px;line-height:16px;">0.00</span>
<div class="a cb" style="left:1182px;top:760px;width:56px;height:21px;"></div>
<svg style="left:1224.3px;top:767.9px" width="9" height="5" viewBox="0 0 9 5" fill="none" stroke="#4a4a4a" stroke-width="1"><path d="M0.500 0.500l4 4 4-4"/></svg>
<span class="a" style="font-size:12px;transform:scaleX(1.014);transform-origin:0 0;left:1185.0px;top:762.0px;line-height:16px;">N/A</span>
<span class="a" style="font-size:12px;font-weight:bold;color:#666699;transform:scaleX(0.978);transform-origin:0 0;left:1267.1px;top:761.0px;line-height:16px;">TOTAL P</span>
<div class="a tb" style="left:1318px;top:758px;width:72px;height:20px;background:#fafafa"></div>
<span class="a" style="font-size:12px;font-weight:bold;color:#666699;transform:scaleX(1.087);transform-origin:0 0;left:1347.9px;top:760.0px;line-height:16px;">300.00</span>
<div class="a dis" style="left:936px;top:787px;width:86px;height:21px;"></div>
<span class="a" style="font-size:12px;color:#a2a2a2;transform:scaleX(0.945);transform-origin:0 0;left:942.3px;top:788.7px;line-height:16px;">Vendor Freight</span>
<div class="a btn" style="left:1102px;top:787px;width:44px;height:21px;"></div>
<span class="a" style="font-size:12px;transform:scaleX(0.950);transform-origin:0 0;left:1111.8px;top:788.7px;line-height:16px;">Save</span>
<div class="a dis" style="left:1150px;top:787px;width:110px;height:21px;"></div>
<svg style="left:1153px;top:789px" width="14" height="17" viewBox="0 0 14 17" fill="none" stroke="#8a8a8a" shape-rendering="crispEdges"><rect x="0.500" y="0.500" width="9" height="11" fill="#f4f4f4" stroke-width="1"/><path d="M2 3h6M2 5h6M2 7h6M2 9h6" stroke="#555" stroke-width="0.900"/><path d="M12.500 10v4.500h-5M9.500 12.500l-2.500 2 2.500 2" stroke-width="1"/></svg>
<span class="a" style="font-size:12px;font-weight:bold;color:#a8a8a8;transform:scaleX(0.987);transform-origin:0 0;left:1169.0px;top:787.8px;line-height:16px;">PLACE ORDER</span>
<div class="a btn" style="left:1264px;top:787px;width:87px;height:21px;"></div>
<span class="a" style="font-size:12px;transform:scaleX(0.944);transform-origin:0 0;left:1273.5px;top:788.8px;line-height:16px;">Cancel Order</span>
<div class="a btn" style="left:1355px;top:787px;width:42px;height:21px;"></div>
<span class="a" style="font-size:12px;transform:scaleX(0.978);transform-origin:0 0;left:1360.5px;top:788.8px;line-height:16px;">Close</span>
<div class="a" style="left:155px;top:785px;width:21px;height:21px;background:#ececec;border:2px solid #c9c9c9"></div>
<div class="a" style="left:179px;top:785px;width:21px;height:21px;background:#ececec;border:2px solid #c9c9c9"></div>
<div class="a" style="left:227px;top:785px;width:21px;height:21px;background:#ececec;border:2px solid #c9c9c9"></div>
<div class="a" style="left:275px;top:785px;width:22px;height:21px;background:#ececec;border:2px solid #c9c9c9"></div>
<div class="a" style="left:158px;top:801px;width:15px;height:2px;background:#fdfdfd"></div>
<div class="a" style="left:182px;top:801px;width:15px;height:2px;background:#fdfdfd"></div>
<svg style="left:158px;top:788px" width="14" height="14" viewBox="0 0 14 14" fill="#f6f6f6" stroke="#555" stroke-width="1"><path d="M3 6.500l1-5h5l2 5"/><rect x="0.500" y="6.500" width="12.500" height="5.500"/><path d="M2.500 9.500h8.500" stroke="#888"/></svg>
<svg style="left:182px;top:790px" width="16" height="12" viewBox="0 0 16 12" fill="none"><rect x="0.500" y="0.500" width="15" height="10" fill="#e9e9e9" stroke="#bdbdbd"/><path d="M3 6h7M3 8h7" stroke="#8a8a8a" stroke-width="1"/><rect x="11" y="2.500" width="2.500" height="2.500" fill="#9a9a9a"/><path d="M0 10.500h16" stroke="#8a8a8a"/></svg>
<svg style="left:230px;top:788px" width="15" height="15" viewBox="0 0 15 15" fill="#f6f6f6" stroke="#444" stroke-width="1"><path d="M3 7l1-5h5l2 5"/><rect x="0.500" y="7" width="13" height="6.500"/><path d="M4 6.500l2-3 2 2 3-4.500" fill="none" stroke="#222"/><path d="M2.500 10.500h9" stroke="#888"/></svg>
<svg style="left:281px;top:788px" width="9" height="15" viewBox="0 0 9 15" fill="none" stroke="#555" stroke-width="1.200"><path d="M1 4.500v6.500a3.500 3.500 0 0 0 7 0v-7.500a2.500 2.500 0 0 0-5 0v7a1 1 0 0 0 2.500 0v-6"/></svg>
<div class="a" style="left:161px;top:817px;width:13px;height:13px;background:#fff;border:1px solid #333"></div>
<span class="a" style="font-size:12px;transform:scaleX(0.929);transform-origin:0 0;left:178.0px;top:812.8px;line-height:16px;">Print Queue</span>
<div class="a" style="left:249px;top:817px;width:13px;height:13px;background:#fff;border:1px solid #333"></div>
<span class="a" style="font-size:12px;transform:scaleX(0.932);transform-origin:0 0;left:266.0px;top:811.5px;line-height:16px;">Print</span>
<span class="a" style="font-size:12px;transform:scaleX(0.928);transform-origin:0 0;left:292.0px;top:811.5px;line-height:16px;">Item Note</span>
<div class="a" style="left:353px;top:817px;width:13px;height:13px;background:#fff;border:1px solid #333"></div>
<span class="a" style="font-size:12px;transform:scaleX(0.963);transform-origin:0 0;left:370.0px;top:812.8px;line-height:16px;">Direct Bill</span>
<div class="a" style="left:430px;top:817px;width:13px;height:13px;background:#fff;border:1px solid #333"></div>
<span class="a" style="font-size:12px;transform:scaleX(0.917);transform-origin:0 0;left:447.0px;top:812.8px;line-height:16px;">Print PAN</span>
<div class="a" style="left:485px;top:421px;width:491px;height:212px;background:#f0f0f0;border:1px solid #9a9a9a;box-shadow:0 2px 10px rgba(0,0,0,0.280),0 0 3px rgba(0,0,0,0.150)"></div>
<div class="a" style="left:486px;top:422px;width:489px;height:30px;background:#fff"></div>
<span class="a" style="font-size:12.5px;color:#929298;transform:scaleX(0.919);transform-origin:0 0;left:493.9px;top:429.4px;line-height:16.5px;">Message</span>
<svg style="left:955px;top:431px" width="10" height="10" viewBox="0 0 10 10" fill="none" stroke="#5a5a5a" stroke-width="0.900"><path d="M0 0l10 10M10 0l-10 10"/></svg>
<span class="a" style="font-size:12px;transform:scaleX(0.922);transform-origin:0 0;left:493.9px;top:474.8px;line-height:16px;">What would you like to do:</span>
<div class="a" style="left:486px;top:518px;width:489px;height:78px;border-top:1px solid #dcdcdc;border-bottom:1px solid #dcdcdc;border-right:1px solid #e2e2e2"></div>
<div class="a" style="left:526px;top:528px;width:13px;height:13px;background:#fff;border:1px solid #333;border-radius:7px"></div>
<div class="a" style="left:526px;top:551px;width:13px;height:13px;background:#fff;border:1px solid #333;border-radius:7px"></div>
<div class="a" style="left:526px;top:574px;width:13px;height:13px;background:#fff;border:1px solid #333;border-radius:7px"></div>
<div class="a" style="left:529px;top:577px;width:7px;height:7px;background:#222;border-radius:4px"></div>
<span class="a" style="font-size:12px;transform:scaleX(0.923);transform-origin:0 0;left:543.2px;top:526.6px;line-height:16px;">Delete</span>
<span class="a" style="font-size:12px;transform:scaleX(0.929);transform-origin:0 0;left:543.2px;top:549.6px;line-height:16px;">Cancel</span>
<span class="a" style="font-size:12px;transform:scaleX(0.921);transform-origin:0 0;left:543.2px;top:572.6px;line-height:16px;">Move to New Order</span>
<span class="a" style="font-size:12px;transform:scaleX(0.930);transform-origin:0 0;left:656.5px;top:571.3px;line-height:16px;">Vendor</span>
<div class="a cb" style="left:700px;top:571px;width:182px;height:21px;"></div>
<svg style="left:868.1px;top:578.9px" width="9" height="5" viewBox="0 0 9 5" fill="none" stroke="#4a4a4a" stroke-width="1"><path d="M0.500 0.500l4 4 4-4"/></svg>
<span class="a" style="font-size:12px;transform:scaleX(0.870);transform-origin:0 0;left:702.1px;top:572.6px;line-height:16px;">Cheezy</span>
<span class="a" style="font-size:12px;transform:scaleX(0.948);transform-origin:0 0;left:891.8px;top:572.6px;line-height:16px;">Qty</span>
<div class="a tb" style="left:915px;top:572px;width:45px;height:20px;background:#fff"></div>
<span class="a" style="font-size:12px;transform:scaleX(0.853);transform-origin:0 0;left:918.7px;top:573.0px;line-height:16px;">10</span>
<div class="a btn" style="left:855px;top:604px;width:49px;height:21px;"></div>
<span class="a" style="font-size:12px;transform:scaleX(0.971);transform-origin:0 0;left:864.7px;top:605.5px;line-height:16px;">Close</span>
<div class="a btn" style="left:912px;top:604px;width:49px;height:21px;"></div>
<span class="a" style="font-size:12px;transform:scaleX(0.974);transform-origin:0 0;left:928.8px;top:605.5px;line-height:16px;">OK</span>
</body>
</html>
